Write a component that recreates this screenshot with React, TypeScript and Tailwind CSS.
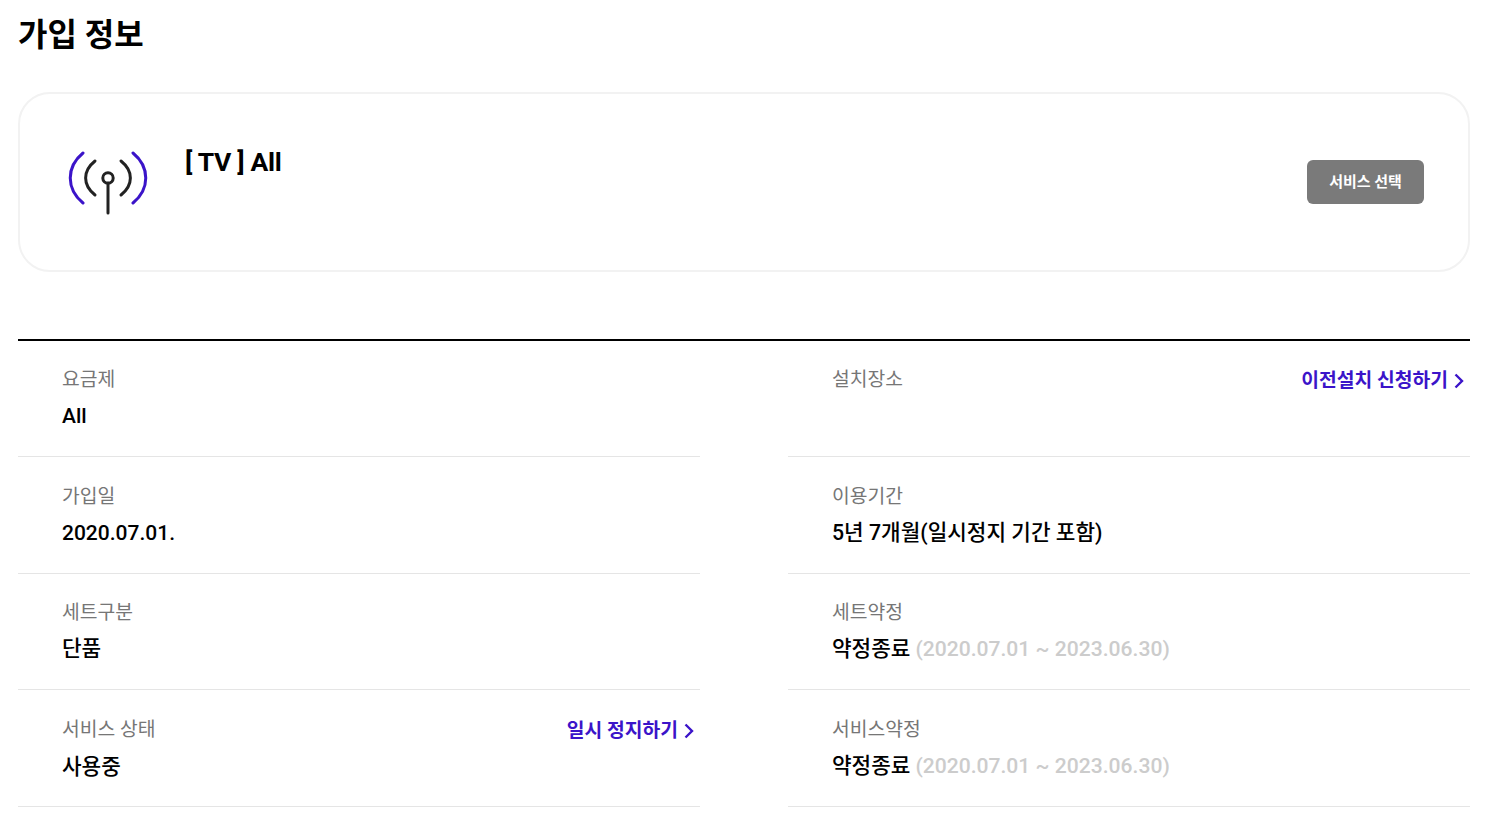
const font = "font-['Roboto','Noto_Sans_CJK_KR',sans-serif]";

type Row = {
  label: string;
  value?: string;
  term?: string;
  link?: string;
  latin?: boolean;
};

const rows: Row[] = [
  { label: "요금제", value: "All", latin: true },
  { label: "설치장소", link: "이전설치 신청하기" },
  { label: "가입일", value: "2020.07.01.", latin: true },
  { label: "이용기간", value: "5년 7개월(일시정지 기간 포함)" },
  { label: "세트구분", value: "단품" },
  { label: "세트약정", value: "약정종료", term: "(2020.07.01 ~ 2023.06.30)" },
  { label: "서비스 상태", value: "사용중", link: "일시 정지하기" },
  { label: "서비스약정", value: "약정종료", term: "(2020.07.01 ~ 2023.06.30)" },
];

function Chevron() {
  return (
    <svg width="10" height="16" viewBox="0 0 10 16" fill="none" className="ml-[6px]">
      <path d="M1.5 1.5 L8 8 L1.5 14.5" stroke="#3b14c9" strokeWidth="2.4" />
    </svg>
  );
}

function SignalIcon() {
  return (
    <svg width="80" height="66" viewBox="0 0 80 66" fill="none" strokeLinecap="round" strokeWidth="3">
      <path d="M15 2 C-2 16 -2 38 15 52" stroke="#3b14c9" />
      <path d="M65 2 C82 16 82 38 65 52" stroke="#3b14c9" />
      <path d="M27 10 C14.5 20 14.5 34 27 44" stroke="#222222" />
      <path d="M53 10 C65.5 20 65.5 34 53 44" stroke="#222222" />
      <circle cx="40" cy="27" r="5.2" stroke="#222222" />
      <path d="M40 32 L40 62" stroke="#222222" />
    </svg>
  );
}

function InfoRow({ row }: { row: Row }) {
  return (
    <div className="h-[116.5px] border-b border-[#e5e5e5] pl-[44px] pr-[6px] pt-[24.5px]">
      <div className="flex justify-between items-start">
        <span className="text-[19.3px] leading-[30px] text-[#767676]">{row.label}</span>
        {row.link && (
          <a className="mt-[1px] flex items-center text-[19.3px] leading-[30px] font-bold text-[#3b14c9]">
            {row.link}
            <Chevron />
          </a>
        )}
      </div>
      {row.value && (
        <p
          className={`mt-[6px] leading-[30px] font-medium text-black ${
            row.latin ? "text-[21px]" : "text-[21.3px]"
          }`}
        >
          {row.value}
          {row.term && <span className="ml-[5px] text-[21.1px] font-medium text-[#cccccc]">{row.term}</span>}
        </p>
      )}
    </div>
  );
}

export default function App() {
  return (
    <div className={`${font} bg-white min-h-screen px-[18px] pt-[12px] w-[1488px]`}>
      <h2 className="text-[32px] leading-[46px] font-bold text-black">가입 정보</h2>
      <div className="mt-[34px] h-[180px] rounded-[32px] border-2 border-[#f2f2f2] flex items-center justify-between pl-[48px] pr-[44px]">
        <div className="flex items-start">
          <div className="w-[80px] pt-[3px]">
            <SignalIcon />
          </div>
          <p className="ml-[37px] -mt-[4px] text-[26.5px] leading-[36px] font-bold tracking-[-0.3px] text-black">[ TV ] All</p>
        </div>
        <button className="w-[117px] h-[44px] rounded-[6px] bg-[#7a7a7a] text-white text-[15px] font-bold">
          서비스 선택
        </button>
      </div>
      <div className="mt-[66.75px] border-t-2 border-black grid grid-cols-2 gap-x-[88px]">
        {rows.map((row) => (
          <InfoRow key={row.label} row={row} />
        ))}
      </div>
    </div>
  );
}
